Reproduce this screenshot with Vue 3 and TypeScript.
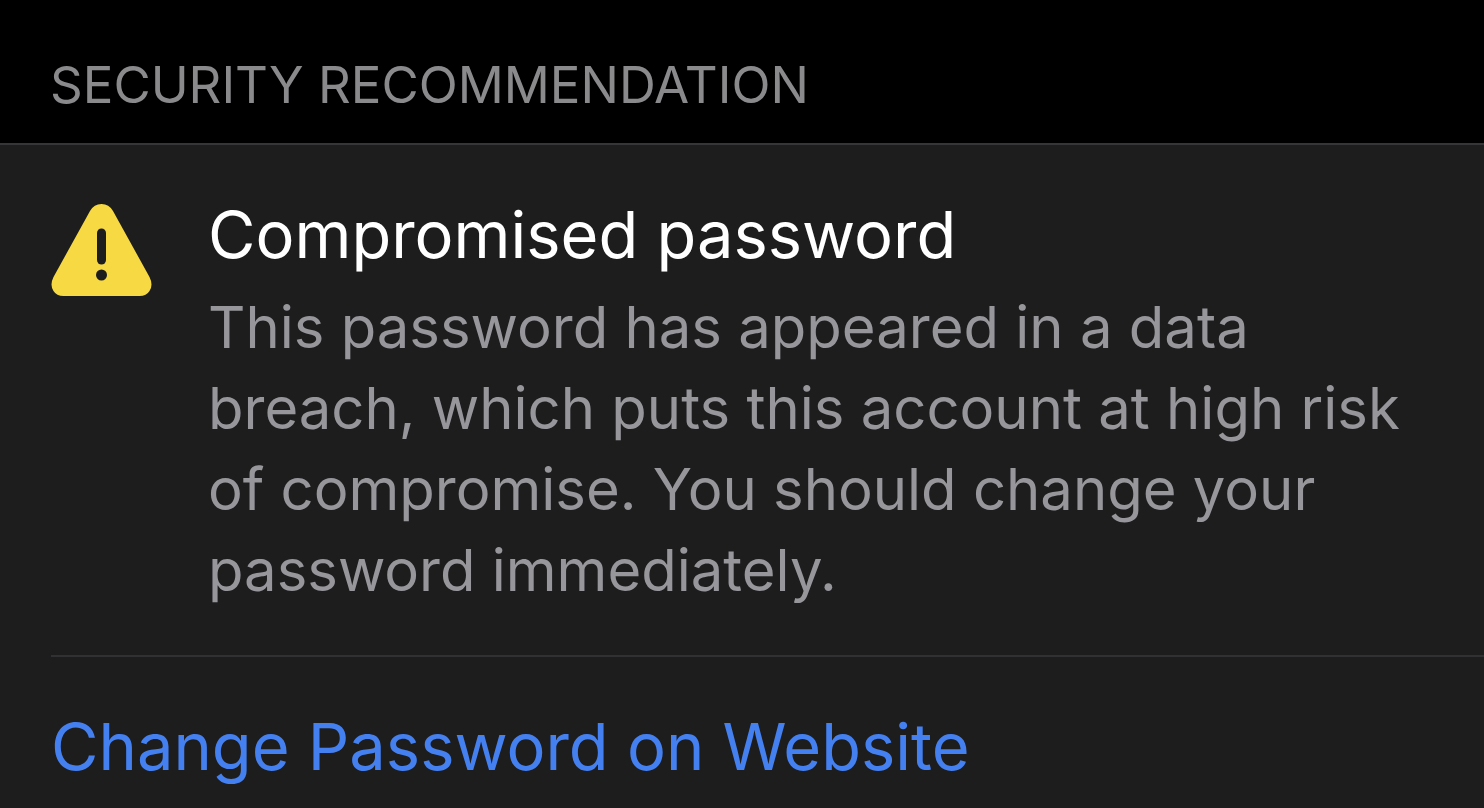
<script setup lang="ts">
const title: string = 'Compromised password'
const message: string =
  'This password has appeared in a data breach, which puts this account at high risk of compromise. You should change your password immediately.'
</script>

<template>
  <main class="page">
    <h1 class="section-title">SECURITY RECOMMENDATION</h1>
    <section class="card">
      <div class="alert">
        <svg class="icon" viewBox="0 0 100 92" role="img" aria-label="Warning">
          <path
            fill="#f7d943"
            d="M38.500 7 Q42.500 0 50 0 Q57.500 0 61.500 7 L98 73 Q102 81 98 87 Q95 92 88 92 H12 Q5 92 2 87 Q-2 81 2 73 Z"
          />
          <path d="M50 29 V56" stroke="#1d1d1e" stroke-width="9" stroke-linecap="round" />
          <circle cx="50" cy="71" r="5.500" fill="#1d1d1e" />
        </svg>
        <div class="copy">
          <h2 class="title">{{ title }}</h2>
          <p class="message">{{ message }}</p>
        </div>
      </div>
      <div class="action">
        <a class="link" href="#change-password">Change Password on Website</a>
      </div>
    </section>
  </main>
</template>

<style>
body {
  background: #1d1d1e;
}
</style>

<style scoped>
.page {
  background: #000;
  font-family: Inter, 'Liberation Sans', sans-serif;
}
.section-title {
  margin: 0;
  padding: 53px 50px 26px;
  font-size: 51px;
  line-height: 64px;
  font-weight: 400;
  color: #8a8a8d;
}
.card {
  padding-left: 51px;
  border-top: 2px solid #363638;
  background: #1d1d1e;
}
.alert {
  display: flex;
  gap: 56px;
  padding: 48px 52px 44px 0;
}
.icon {
  flex: none;
  width: 101px;
  height: 92px;
  margin-top: 11px;
}
.copy {
  flex: 1;
}
.title {
  margin: 0;
  font-size: 65px;
  line-height: 84px;
  font-weight: 400;
  color: #fff;
}
.message {
  margin: 10px 0 0;
  font-size: 58px;
  line-height: 81px;
  color: #96969b;
}
.action {
  padding: 48px 0 19px;
  border-top: 2px solid #313133;
}
.link {
  display: block;
  font-size: 65px;
  line-height: 84px;
  color: #4580f0;
  text-decoration: none;
}
</style>
